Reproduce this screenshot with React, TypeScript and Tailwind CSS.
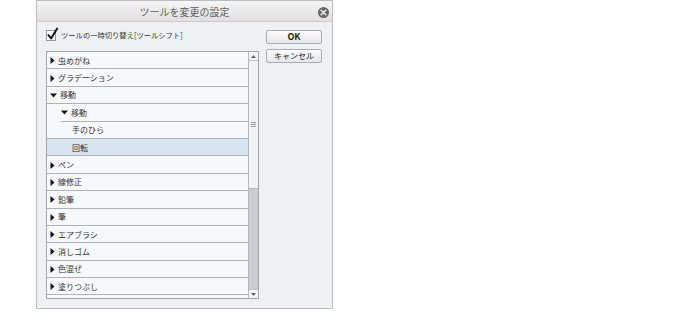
import React from 'react';

type Row = { label: string; kind: 'closed' | 'open' | 'leaf'; indent: number; selected?: boolean; lineIndent?: number };

const rows: Row[] = [
  { label: '虫めがね', kind: 'closed', indent: 0 },
  { label: 'グラデーション', kind: 'closed', indent: 0 },
  { label: '移動', kind: 'open', indent: 0 },
  { label: '移動', kind: 'open', indent: 1, lineIndent: 14 },
  { label: '手のひら', kind: 'leaf', indent: 2 },
  { label: '回転', kind: 'leaf', indent: 2, selected: true },
  { label: 'ペン', kind: 'closed', indent: 0 },
  { label: '線修正', kind: 'closed', indent: 0 },
  { label: '鉛筆', kind: 'closed', indent: 0 },
  { label: '筆', kind: 'closed', indent: 0 },
  { label: 'エアブラシ', kind: 'closed', indent: 0 },
  { label: '消しゴム', kind: 'closed', indent: 0 },
  { label: '色混ぜ', kind: 'closed', indent: 0 },
  { label: '塗りつぶし', kind: 'closed', indent: 0 },
];

const font = { fontFamily: '"Noto Sans CJK JP", "Liberation Sans", sans-serif' };

function Arrow({ open }: { open: boolean }) {
  return open ? (
    <svg width="7" height="5" viewBox="0 0 7 5" className="mr-[3px]">
      <path d="M0 0.5 L7 0.5 L3.5 4.5 Z" fill="#111" />
    </svg>
  ) : (
    <svg width="5" height="7" viewBox="0 0 5 7" className="mr-[3px]">
      <path d="M0.5 0 L4.5 3.5 L0.5 7 Z" fill="#111" />
    </svg>
  );
}

function TreeRow({ row }: { row: Row }) {
  const pad = row.indent === 0 ? 3 : row.indent === 1 ? 14 : 25;
  return (
    <div className={`relative flex h-[17.4px] items-center ${row.selected ? 'bg-[#d5e4ef]' : 'bg-[#f6f8fb]'}`}>
      <div className="flex items-center" style={{ paddingLeft: pad }}>
        {row.kind !== 'leaf' && <Arrow open={row.kind === 'open'} />}
        <span className="text-[8px] leading-none text-[#333]">{row.label}</span>
      </div>
      <div
        className="absolute bottom-0 right-0 h-px bg-[#aeb3b9]"
        style={{ left: row.lineIndent ?? 0 }}
      />
    </div>
  );
}

export default function App() {
  return (
    <div className="h-[316px] w-[693px] bg-white" style={font}>
      <div className="ml-[36px] flex h-[309px] w-[297px] flex-col border border-[#b9bcc0] bg-[#eef1f4]">
        {/* title bar */}
        <div className="relative flex h-[21px] items-center justify-center border-b border-[#c8cbcf] bg-gradient-to-b from-[#f6f6f6] to-[#dfdfdf]">
          <span className="text-[10px] text-[#606060]">ツールを変更の設定</span>
          <div className="absolute right-[3px] top-[6px] flex h-[11px] w-[11px] items-center justify-center rounded-full bg-[#666]">
            <svg width="7" height="7" viewBox="0 0 7 7">
              <path d="M1.2 1.2 L5.8 5.8 M5.8 1.2 L1.2 5.8" stroke="#e8e8e8" strokeWidth="1.6" strokeLinecap="round" />
            </svg>
          </div>
        </div>

        <div className="flex flex-1 pl-[9px] pr-[10px]">
          {/* left column */}
          <div className="flex w-[213px] flex-col">
            <div className="mt-[7px] flex h-[13px] items-center">
              <div className="relative mr-[5px] h-[11px] w-[10px] border border-[#9a9a9a] bg-white">
                <svg width="13" height="13" viewBox="0 0 13 13" className="absolute -left-[1px] -top-[4px]">
                  <path d="M2 7.5 L5 11.5 L11.5 1" stroke="#111" strokeWidth="2" fill="none" strokeLinejoin="round" />
                </svg>
              </div>
              <span className="text-[7.3px] text-[#333]">ツールの一時切り替え[ツールシフト]</span>
            </div>

            <div className="mt-[9px] flex h-[248px] border border-[#a2a6ab] bg-[#f6f8fb]">
              <div className="flex-1 overflow-hidden">
                {rows.map((r, i) => (
                  <TreeRow key={i} row={r} />
                ))}
              </div>
              {/* scrollbar */}
              <div className="flex w-[10px] flex-col border-l border-[#b5b9be] bg-[#c9cdd2]">
                <div className="flex h-[9px] items-center justify-center border-b border-[#bfc3c8] bg-[#f3f4f6]">
                  <svg width="5" height="3" viewBox="0 0 5 3">
                    <path d="M0 3 L2.5 0 L5 3 Z" fill="#666" />
                  </svg>
                </div>
                <div className="flex h-[128px] flex-col items-center justify-center border-b border-[#b3b7bc] bg-[#f1f3f6]">
                  <div className="h-px w-[5px] bg-[#999]" />
                  <div className="mt-px h-px w-[5px] bg-[#999]" />
                  <div className="mt-px h-px w-[5px] bg-[#999]" />
                </div>
                <div className="flex-1" />
                <div className="flex h-[9px] items-center justify-center border-t border-[#bfc3c8] bg-[#f3f4f6]">
                  <svg width="5" height="3" viewBox="0 0 5 3">
                    <path d="M0 0 L2.5 3 L5 0 Z" fill="#666" />
                  </svg>
                </div>
              </div>
            </div>
          </div>

          {/* buttons */}
          <div className="ml-[7px] flex flex-1 flex-col pt-[8px]">
            <button className="flex h-[14px] items-center justify-center rounded-[2px] border border-[#a9adb2] bg-gradient-to-b from-[#fbfbfb] to-[#e6e7e9] text-[9px] font-semibold text-[#222]">
              OK
            </button>
            <button className="mt-[5px] flex h-[14px] items-center justify-center rounded-[2px] border border-[#a9adb2] bg-gradient-to-b from-[#fbfbfb] to-[#e6e7e9] text-[8px] text-[#222]">
              キャンセル
            </button>
          </div>
        </div>
      </div>
    </div>
  );
}
